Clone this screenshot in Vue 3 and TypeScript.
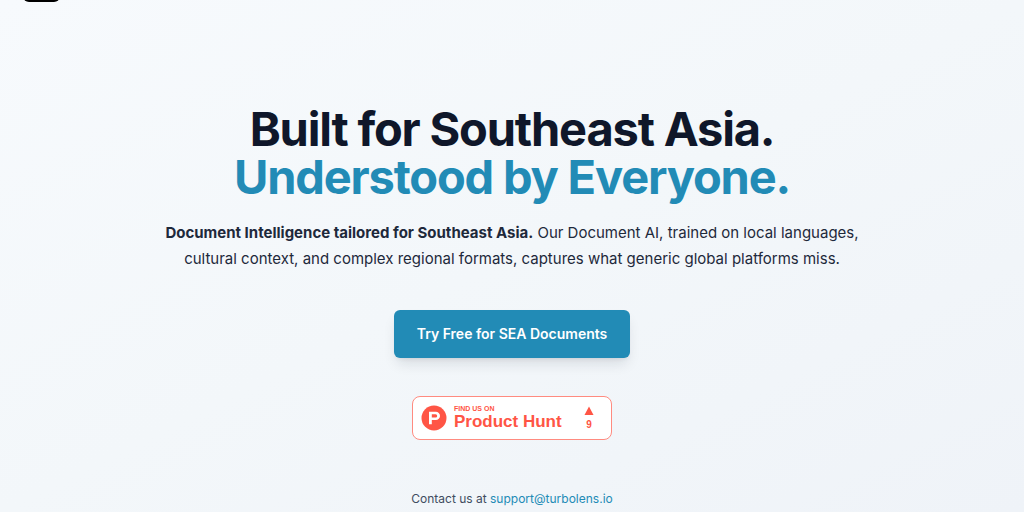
<script setup lang="ts">
const contactEmail: string = 'support@turbolens.io'
const votes: number = 9
</script>

<template>
  <div class="page">
    <span class="tab" aria-hidden="true"></span>
    <main class="hero">
      <h1 class="title">
        <span class="line">Built for Southeast Asia.</span>
        <span class="line accent">Understood by Everyone.</span>
      </h1>
      <p class="lead">
        <strong>Document Intelligence tailored for Southeast Asia.</strong>
        Our Document AI, trained on local languages, cultural context, and complex regional formats, captures what generic global platforms miss.
      </p>
      <button class="cta" type="button">Try Free for SEA Documents</button>
      <a class="hunt" href="#product-hunt">
        <svg class="mark" viewBox="0 0 26 26" aria-hidden="true">
          <circle cx="13" cy="13" r="12.5" fill="#ff5545" />
          <path fill="#fff" fill-rule="evenodd" d="M8 6.7h6.8a4.2 4.2 0 0 1 0 8.4h-4v4.2H8zM10.8 9.3v3.2h3.8a1.6 1.6 0 0 0 0-3.2z" />
        </svg>
        <span class="names">
          <span class="small">FIND US ON</span>
          <span class="brand">Product Hunt</span>
        </span>
        <span class="votes">
          <svg class="arrow" viewBox="0 0 10 9" aria-hidden="true"><path fill="#ff5545" d="M5 0.5L9.5 9H0.5z" /></svg>
          <span>{{ votes }}</span>
        </span>
      </a>
      <p class="contact">Contact us at <a :href="`mailto:${contactEmail}`">{{ contactEmail }}</a></p>
    </main>
  </div>
</template>

<style>
body {
  margin: 0;
}
</style>

<style scoped>
.page {
  box-sizing: border-box;
  position: relative;
  min-height: 100vh;
  overflow: hidden;
  background: linear-gradient(to bottom right, #f7fafd, #f3f7fa 50%, #eff3f8);
  color: #1e293b;
  font-family: Inter, "Liberation Sans", sans-serif;
}

.tab {
  position: absolute;
  top: -34px;
  left: 23px;
  width: 37px;
  height: 36px;
  border-radius: 6px;
  background: #000;
}

.hero {
  display: flex;
  flex-direction: column;
  align-items: center;
  padding: 105px 24px 0;
  text-align: center;
}

.title {
  margin: 0;
  color: #0f172a;
  font-size: 47px;
  font-weight: 700;
  line-height: 48px;
  letter-spacing: -0.025em;
}

.line {
  display: block;
}

.accent {
  color: #228bb6;
}

.lead {
  max-width: 718px;
  margin: 19px 0 0;
  font-size: 15px;
  line-height: 26px;
}

.lead strong {
  font-weight: 700;
}

.cta {
  height: 48px;
  margin: 38px 0 0;
  padding: 0 23px;
  border: 0;
  border-radius: 6px;
  background: #228bb6;
  box-shadow: 0 8px 14px -3px rgb(15 23 42 / 12%), 0 3px 5px -3px rgb(15 23 42 / 10%);
  color: #fff;
  font: 600 14px/20px Inter, "Liberation Sans", sans-serif;
}

.hunt {
  box-sizing: border-box;
  display: flex;
  align-items: center;
  width: 200px;
  height: 44px;
  margin-top: 38px;
  padding: 0 17px 0 8px;
  border: 1px solid #ff8b80;
  border-radius: 8px;
  background: #fff;
  color: #ff5545;
  font-family: "Liberation Sans", Arial, sans-serif;
  font-weight: 700;
  text-decoration: none;
}

.mark {
  width: 26px;
  height: 26px;
}

.names {
  display: flex;
  flex-direction: column;
  margin-left: 7px;
  text-align: left;
  white-space: nowrap;
}

.small {
  font-size: 7px;
  line-height: 8px;
}

.brand {
  font-size: 17px;
  line-height: 18px;
}

.votes {
  display: flex;
  flex-direction: column;
  align-items: center;
  gap: 4px;
  margin-left: auto;
  font-size: 10px;
  line-height: 12px;
}

.arrow {
  width: 10px;
  height: 9px;
}

.contact {
  margin: 49px 0 0;
  color: #3f4c60;
  font-size: 12px;
  line-height: 20px;
}

.contact a {
  color: #228bb6;
  text-decoration: none;
}
</style>
